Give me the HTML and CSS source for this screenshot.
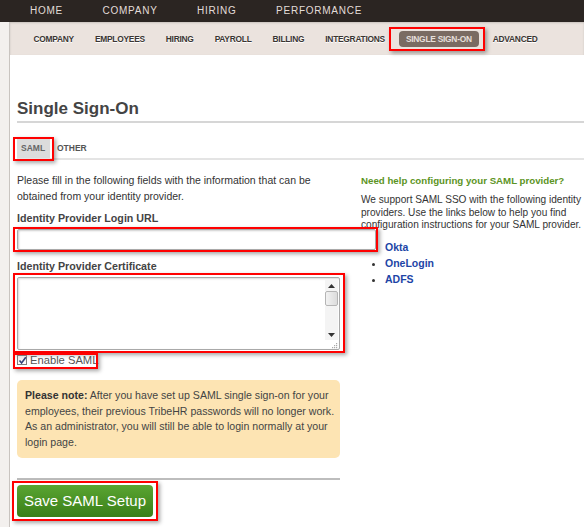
FILE: index.html
```html
<!DOCTYPE html>
<html>
<head>
<meta charset="utf-8">
<link rel="stylesheet" href="styles.css">
</head>
<body>
<div class="topnav">
  <a>HOME</a><a>COMPANY</a><a>HIRING</a><a>PERFORMANCE</a>
</div>
<div class="frame">
  <div class="strip"></div>
  <div class="main">
    <div class="subnav">
      <a>COMPANY</a><a>EMPLOYEES</a><a>HIRING</a><a>PAYROLL</a><a>BILLING</a><a>INTEGRATIONS</a><a class="active hl hl-pill">SINGLE SIGN-ON</a><a>ADVANCED</a>
    </div>
    <div class="content">
      <h1 class="title">Single Sign-On</h1>
      <div class="tabs">
        <span class="tab active hl hl-tab">SAML</span><span class="tab">OTHER</span>
      </div>
      <div class="cols">
        <div class="left">
          <p class="intro">Please fill in the following fields with the information that can be obtained from your identity provider.</p>
          <label class="lbl">Identity Provider Login URL</label>
          <div class="fit hl hl-input"><input class="url" type="text"></div>
          <label class="lbl">Identity Provider Certificate</label>
          <div class="ta-box hl hl-ta">
            <textarea class="cert"></textarea>
            <div class="sbar">
              <div class="sb-btn"><svg width="7" height="4" viewBox="0 0 7 4"><path d="M0 4 L3.5 0 L7 4 Z" fill="#333"/></svg></div>
              <div class="sb-thumb"></div>
              <div class="sb-track"></div>
              <div class="sb-btn"><svg width="7" height="4" viewBox="0 0 7 4"><path d="M0 0 L3.5 4 L7 0 Z" fill="#333"/></svg></div>
              <div class="sb-grip"><svg width="7" height="7" viewBox="0 0 7 7"><g fill="#aaa"><rect x="5" y="1" width="1.2" height="1.2"/><rect x="3" y="3" width="1.2" height="1.2"/><rect x="5" y="3" width="1.2" height="1.2"/><rect x="1" y="5" width="1.2" height="1.2"/><rect x="3" y="5" width="1.2" height="1.2"/><rect x="5" y="5" width="1.2" height="1.2"/></g></svg></div>
            </div>
          </div>
          <label class="check hl hl-check"><span class="cbox"><svg width="9" height="9" viewBox="0 0 9 9"><path d="M1.5 4.5 L3.6 7 L7.8 1.2" fill="none" stroke="#33427a" stroke-width="1.6"/></svg></span>Enable SAML</label>
          <div class="note"><b>Please note:</b> After you have set up SAML single sign-on for your employees, their previous TribeHR passwords will no longer work. As an administrator, you will still be able to login normally at your login page.</div>
          <div class="rule"></div>
          <button class="save hl hl-btn">Save SAML Setup</button>
        </div>
        <div class="right">
          <h3 class="help">Need help configuring your SAML provider?</h3>
          <p class="helptext">We support SAML SSO with the following identity providers. Use the links below to help you find configuration instructions for your SAML provider.</p>
          <ul class="links">
            <li><a>Okta</a></li>
            <li><a>OneLogin</a></li>
            <li><a>ADFS</a></li>
          </ul>
        </div>
      </div>
    </div>
  </div>
</div>
</body>
</html>
```

FILE: styles.css
```css
html, body { margin: 0; padding: 0; background: #fff; }
body { font-family: "Liberation Sans", Arial, sans-serif; color: #333; width: 584px; height: 527px; overflow: hidden; }

.topnav { background: #2b2522; height: 22px; display: flex; align-items: center; padding-left: 10px; }
.topnav a { color: #e2dcd8; font-size: 10px; letter-spacing: 0.75px; padding: 0 19.5px 0 20px; line-height: 22px; }

.frame { display: flex; }
.strip { width: 9px; background: #f3f0ee; border-right: 1px solid #c9c4c0; min-height: 520px; flex: none; }
.main { flex: 1; min-width: 0; }

.subnav { background: #ebe3de; height: 33px; display: flex; align-items: center; padding-left: 13px; box-shadow: inset 0 1px 2px rgba(0,0,0,.15); }
.subnav a { font-size: 8.4px; font-weight: bold; color: #3a3532; padding: 0 10.5px; letter-spacing: -0.25px; text-shadow: 0 1px 0 #fff; }
.subnav a.active { background: #7a6b62; color: #e6dfda; border-radius: 4px; padding: 3px 7px; margin: 0 3.5px; text-shadow: none; }

.content { padding: 0 0 0 7px; }
.title { font-size: 17px; font-weight: bold; color: #444; margin: 0; padding-top: 44px; line-height: 20px; padding-bottom: 2px; border-bottom: 2px solid #d6d6d6; }

.tabs { margin-top: 15px; border-bottom: 2px solid #e4e4e4; height: 20px; display: flex; }
.tab { font-size: 8.5px; font-weight: bold; color: #555; line-height: 20px; padding: 0 0 0 7px; }
.tab.active { background: #dcdcdc; color: #666; padding: 0 0 0 4px; width: 29px; text-align: left; }

.cols { display: flex; gap: 21px; }
.left { width: 323px; flex: none; }
.right { flex: 1; min-width: 0; }

.intro { font-size: 10.5px; line-height: 16px; margin: 12px 0 0; color: #333; }
.lbl { display: block; font-size: 10.7px; font-weight: bold; color: #444; margin-top: 7px; line-height: 14px; }
.lbl + .fit, .lbl + .ta-box { margin-top: 4px; }
.fit { width: max-content; }
.url { display: block; box-sizing: border-box; width: 359px; height: 21px; margin: 0; border: 1px solid #a9a9a9; border-radius: 2px; box-shadow: inset 1px 1px 2px rgba(0,0,0,.2); }
.fit + .lbl { margin-top: 9px; }

.ta-box { display: flex; box-sizing: border-box; width: 323px; height: 73px; border: 1px solid #a9a9a9; border-radius: 2px; box-shadow: inset 1px 1px 2px rgba(0,0,0,.15); background: #fff; }
.cert { flex: 1; border: none; outline: none; resize: none; background: transparent; margin: 0; }
.sbar { width: 13px; display: flex; flex-direction: column; padding: 2px 1px 0 0; }
.sb-btn { height: 11px; display: flex; align-items: center; justify-content: center; background: #f4f4f4; }
.sb-thumb { height: 13px; border: 1px solid #b5b5b5; border-radius: 2px; background: linear-gradient(90deg, #f2f2f2, #dcdcdc); }
.sb-track { flex: 1; background: #f4f4f4; }
.sb-grip { height: 9px; display: flex; justify-content: flex-end; align-items: flex-end; }

.check { display: flex; width: max-content; align-items: center; gap: 3px; font-size: 11.2px; color: #555; margin-top: 3px; height: 14px; }
.cbox { width: 10px; height: 10px; border: 1px solid #7e7e7e; background: linear-gradient(#e8e8e8, #fff); display: flex; align-items: center; justify-content: center; box-sizing: border-box; }
.cbox svg { flex: none; }

.note { margin-top: 13px; background: #fde4b3; border-radius: 5px; padding: 8px 5px 7px 8px; font-size: 10.6px; line-height: 15.7px; color: #444; }
.note b { color: #333; }
.rule { margin-top: 20px; height: 2px; background: #bdbdbd; }
.save { display: block; margin-top: 5px; width: 136px; height: 32px; border: none; border-radius: 4px; background: linear-gradient(#5aa532, #3a7f18); color: #fff; font-family: "Liberation Sans", Arial, sans-serif; font-size: 15px; padding: 0; text-align: center; }

.help { font-size: 9.7px; font-weight: bold; color: #5c9424; margin: 15px 0 0; line-height: 12px; }
.helptext { font-size: 10.1px; line-height: 12.5px; margin: 7px 0 0; color: #333; }
.links { margin: 7px 0 0; padding: 0 0 0 24px; font-size: 10.5px; line-height: 16px; }
.links a { color: #1d45a6; font-weight: bold; }

.hl { position: relative; }
.hl::after { content: ""; position: absolute; border: 2px solid #f00; box-shadow: 2px 2px 4px rgba(0,0,0,.35); pointer-events: none; }
.hl-pill::after { left: -10px; right: -6px; top: -4px; bottom: -4px; }
.hl-tab::after { left: -4px; right: -4px; top: -1px; bottom: -3px; }
.hl-input::after { left: -4px; right: -2px; top: -2px; bottom: -2px; }
.hl-ta::after { left: -5px; right: -6px; top: -5px; bottom: -4px; }
.hl-check::after { left: -4px; right: 0; top: 0; bottom: -2px; }
.hl-btn::after { left: -5px; right: -5px; top: -4px; bottom: -4px; }
```
